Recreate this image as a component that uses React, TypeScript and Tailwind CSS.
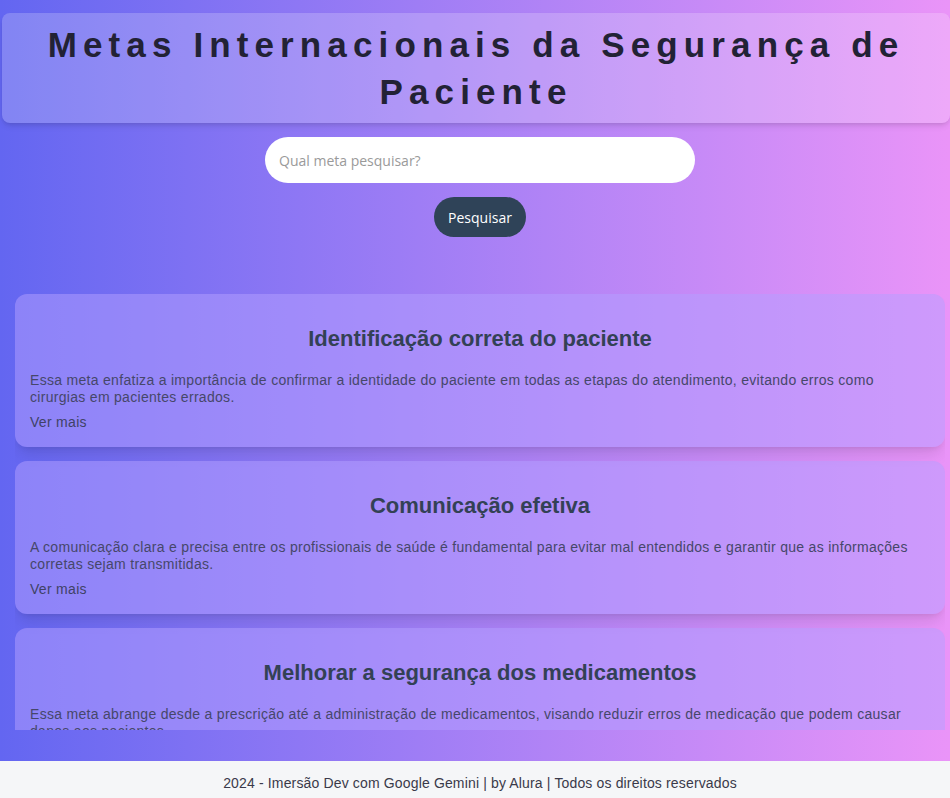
import React from 'react'

const metas = [
  {
    titulo: 'Identificação correta do paciente',
    descricao:
      'Essa meta enfatiza a importância de confirmar a identidade do paciente em todas as etapas do atendimento, evitando erros como cirurgias em pacientes errados.',
  },
  {
    titulo: 'Comunicação efetiva',
    descricao:
      'A comunicação clara e precisa entre os profissionais de saúde é fundamental para evitar mal entendidos e garantir que as informações corretas sejam transmitidas.',
  },
  {
    titulo: 'Melhorar a segurança dos medicamentos',
    descricao:
      'Essa meta abrange desde a prescrição até a administração de medicamentos, visando reduzir erros de medicação que podem causar danos aos pacientes.',
  },
]

const Card = ({ titulo, descricao }: { titulo: string; descricao: string }) => (
  <div className="shrink-0 rounded-xl bg-[#b4a0ff]/50 px-[15px] pb-[16px] pt-[30px] shadow-lg">
    <h2 className="text-center text-[22px] leading-[30px] font-bold text-[#334155]">{titulo}</h2>
    <p className="mt-[18px] text-[14px] leading-[17px] tracking-[0.3px] text-[#46476a]">
      {descricao}
    </p>
    <a
      href="#"
      className="mt-[8px] block text-[14px] leading-[17px] tracking-[0.3px] text-[#3f4266]"
    >
      Ver mais
    </a>
  </div>
)

export default function App() {
  return (
    <div className="flex h-[798px] flex-col overflow-hidden font-['Liberation_Sans',sans-serif]">
      <div className="flex min-h-0 flex-1 flex-col bg-linear-to-r from-[#6366f1] to-[#ea94f8] pb-[31px]">
        <header className="ml-[2px] mt-[13px] rounded-lg bg-white/20 px-4 py-[8px] shadow-md">
          <h1 className="text-center text-[35px] leading-[47px] font-bold tracking-[0.175em] text-[#222235]">
            Metas Internacionais da Segurança de Paciente
          </h1>
        </header>

        <div className="ml-[10px] mt-[14px] flex flex-col items-center gap-[14px] font-['Open_Sans',sans-serif]">
          <input
            type="text"
            placeholder="Qual meta pesquisar?"
            className="h-[46px] w-[430px] rounded-full bg-white px-[14px] text-[14px] text-gray-700 outline-none placeholder:text-[#9a9a9a]"
          />
          <button className="h-[40px] w-[92px] rounded-full bg-[#2f4358] text-[14px] text-white">
            Pesquisar
          </button>
        </div>

        <main className="ml-[15px] mr-[5px] mt-[57px] flex min-h-0 flex-1 flex-col gap-[14px] overflow-hidden">
          {metas.map((m) => (
            <Card key={m.titulo} {...m} />
          ))}
        </main>
      </div>

      <footer className="flex h-[37px] shrink-0 justify-center bg-[#f5f6f8] pl-[10px] pt-[14px] text-[14px] leading-[17px] tracking-[0.15px] text-[#3a3a4a]">
        2024 - Imersão Dev com Google Gemini | by Alura | Todos os direitos reservados
      </footer>
    </div>
  )
}
